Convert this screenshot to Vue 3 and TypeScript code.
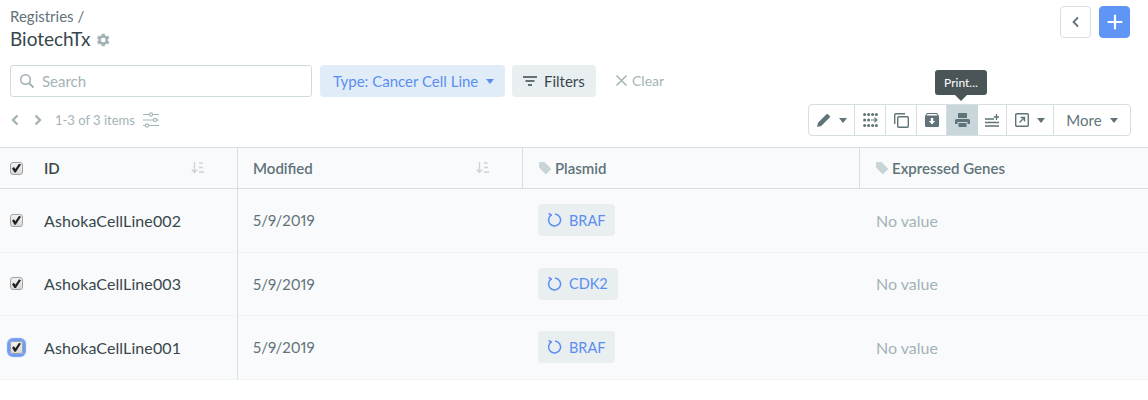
<template>
  <div class="page">
    <div class="head">
      <div>
        <div class="crumb">Registries /</div>
        <div class="title">
          <span>BiotechTx</span>
          <svg class="gear" width="16" height="16" viewBox="0 0 24 24"><path fill="#a3b3b8" d="M19.4 13a7.6 7.6 0 0 0 0-2l2.3-1.7-2.3-4-2.6 1.1a7.500 7.500 0 0 0-1.800-1L14.600 2.600h-4.600L9.600 5.400a7.500 7.500 0 0 0-1.800 1L5.200 5.300l-2.300 4L5.200 11a7.600 7.600 0 0 0 0 2l-2.300 1.700 2.300 4 2.600-1.100c.5.400 1.100.8 1.800 1l.4 2.800h4.600l.4-2.800c.7-.2 1.300-.6 1.800-1l2.600 1.100 2.300-4zM12.300 15.500a3.500 3.500 0 1 1 0-7 3.500 3.500 0 0 1 0 7z" /></svg>
        </div>
      </div>
      <div class="head-actions">
        <button class="square">
          <svg width="12" height="12" viewBox="0 0 12 12"><path d="M8 1.500 3.500 6 8 10.500" fill="none" stroke="#5f7378" stroke-width="1.800" /></svg>
        </button>
        <button class="square primary">
          <svg width="16" height="16" viewBox="0 0 16 16"><path d="M8 1.500v13M1.500 8h13" stroke="#fff" stroke-width="2.200" stroke-linecap="round" /></svg>
        </button>
      </div>
    </div>

    <div class="filters">
      <div class="search">
        <svg width="16" height="16" viewBox="0 0 16 16"><circle cx="6.500" cy="6.500" r="4.800" fill="none" stroke="#9fb0b5" stroke-width="1.500" /><path d="m10 10 4.500 4.500" stroke="#9fb0b5" stroke-width="1.800" /></svg>
        <span>Search</span>
      </div>
      <div class="chip type">Type: Cancer Cell Line<i class="caret"></i></div>
      <div class="chip filter">
        <svg width="14" height="10" viewBox="0 0 14 10"><path d="M0 1h14M2.500 5h9M5 9h4" stroke="#37474b" stroke-width="1.500" /></svg>
        Filters
      </div>
      <div class="clear">
        <svg width="13" height="13" viewBox="0 0 13 13"><path d="m1.500 1.500 10 10m0-10-10 10" stroke="#a3b3b8" stroke-width="1.500" /></svg>
        Clear
      </div>
    </div>

    <div class="toolbar-row">
      <div class="pager">
        <svg width="10" height="12" viewBox="0 0 10 12"><path d="M7.500 1.500 3 6l4.500 4.500" fill="none" stroke="#a3b3b8" stroke-width="2.400" /></svg>
        <svg class="next" width="10" height="12" viewBox="0 0 10 12"><path d="M2.500 1.500 7 6l-4.500 4.500" fill="none" stroke="#a3b3b8" stroke-width="2.400" /></svg>
        <span>1-3 of 3 items</span>
        <svg width="16" height="16" viewBox="0 0 16 16" fill="none" stroke="#a3b3b8" stroke-width="1.100"><path d="M0 2.500h6.500m3 0H16M0 8h10.500m3 0H16M0 13.500h2.500m3 0H16" /><circle cx="8" cy="2.500" r="1.600" /><circle cx="12" cy="8" r="1.600" /><circle cx="4" cy="13.500" r="1.600" /></svg>
      </div>
      <div class="tools">
        <div class="tool edit">
          <svg width="14" height="14" viewBox="0 0 14 14"><path fill="#5f7378" d="M0 14l1-4.200L9.500 1.300a1 1 0 0 1 1.400 0l1.800 1.800a1 1 0 0 1 0 1.400L4.200 13z" /></svg>
          <i class="caret dark"></i>
        </div>
        <div class="tool w31">
          <svg width="15" height="14" viewBox="0 0 15 14" fill="#5f7378"><circle cx="1.600" cy="1.600" r="1.500" /><circle cx="5.600" cy="1.600" r="1.500" /><circle cx="9.600" cy="1.600" r="1.500" /><circle cx="13.400" cy="1.600" r="1.500" /><circle cx="1.600" cy="7" r="1.500" /><circle cx="5.600" cy="7" r="1.500" /><circle cx="1.600" cy="12.400" r="1.500" /><circle cx="5.600" cy="12.400" r="1.500" /><circle cx="9.600" cy="12.400" r="1.500" /><circle cx="13.400" cy="12.400" r="1.500" /><path d="M8 6.400h4.500L11 4.900l.8-.7L14.700 7l-2.900 2.800-.8-.7 1.500-1.500H8z" /></svg>
        </div>
        <div class="tool w31">
          <svg width="15" height="15" viewBox="0 0 15 15" fill="none" stroke="#5f7378" stroke-width="1.400"><rect x="3.700" y="3.700" width="10.600" height="10.600" rx="1" /><path d="M.7 11V2A1.300 1.300 0 0 1 2 .7h9" /></svg>
        </div>
        <div class="tool w30">
          <svg width="14" height="14" viewBox="0 0 14 14"><path fill="#5f7378" fill-rule="evenodd" d="M2 0h10l2 3v10a1 1 0 0 1-1 1H1a1 1 0 0 1-1-1V3zM5.800 5v3H3.800L7 11.500 10.200 8h-2V5zM1.500 2.500h11L11.500 1h-9z" /></svg>
        </div>
        <div class="tool active">
          <svg width="15" height="14" viewBox="0 0 15 14"><path fill="#5f7378" fill-rule="evenodd" d="M3 0h9v5H3zM1.500 6h12A1.500 1.500 0 0 1 15 7.500V11h-2.500V9h-10v2H0V7.500A1.500 1.500 0 0 1 1.500 6zM3.500 10h8v4h-8z" /></svg>
          <div class="tooltip">Print...</div>
        </div>
        <div class="tool w29">
          <svg width="14" height="13" viewBox="0 0 14 13"><path d="M0 5h9M0 8.500h14M0 12h14" stroke="#5f7378" stroke-width="1.400" /><path d="M11.500 0v6M8.800 3h5.400" stroke="#5f7378" stroke-width="1.300" /></svg>
        </div>
        <div class="tool w47">
          <svg width="14" height="14" viewBox="0 0 14 14" fill="none" stroke="#5f7378" stroke-width="1.400"><rect x=".7" y=".7" width="12.600" height="12.600" rx="1" /><path d="M4.500 9.500 9.500 4.500M5.500 4.500h4v4" /></svg>
          <i class="caret dark"></i>
        </div>
        <div class="tool more">More<i class="caret dark"></i></div>
      </div>
    </div>

    <div class="grid">
      <div class="row header">
        <div class="cell first">
          <input type="checkbox" checked />
          <b class="id-label">ID</b>
          <svg class="sort" width="13" height="12" viewBox="0 0 13 12"><path d="M3.500 0v10M.8 7.500l2.700 3 2.700-3" fill="none" stroke="#c8d4d7" stroke-width="1.300" /><path d="M8 1h3.500M8 5.500h4M8 10h5" stroke="#c8d4d7" stroke-width="1.300" /></svg>
        </div>
        <div class="cell second">
          <b>Modified</b>
          <svg class="sort" width="13" height="12" viewBox="0 0 13 12"><path d="M3.500 0v10M.8 7.500l2.700 3 2.700-3" fill="none" stroke="#c8d4d7" stroke-width="1.300" /><path d="M8 1h3.500M8 5.500h4M8 10h5" stroke="#c8d4d7" stroke-width="1.300" /></svg>
        </div>
        <div class="cell" v-for="col in tagColumns" :key="col">
          <svg class="tag" width="12" height="12" viewBox="0 0 12 12"><path fill="#c8d4d7" d="M0 1a1 1 0 0 1 1-1h4.500l6.200 6.200a1 1 0 0 1 0 1.400l-4.100 4.100a1 1 0 0 1-1.400 0L0 5.500z" /></svg>
          <b>{{ col }}</b>
        </div>
      </div>
      <div class="row" v-for="(item, i) in items" :key="item.id">
        <div class="cell first">
          <span class="check-wrap" :class="{ focused: i === 2 }"><input type="checkbox" checked /></span>
          <span class="name">{{ item.id }}</span>
        </div>
        <div class="cell second date">5/9/2019</div>
        <div class="cell">
          <span class="pill">
            <svg width="16" height="16" viewBox="0 0 16 16" fill="none" stroke="#5b8def" stroke-width="1.500"><path d="M4.700 2.700A6 6 0 1 0 8 2" /><path d="M1.700 1.300 4.600 3.400" /></svg>
            {{ item.plasmid }}
          </span>
        </div>
        <div class="cell empty">No value</div>
      </div>
    </div>
  </div>
</template>

<script setup lang="ts">
interface Item {
  id: string
  plasmid: string
}

const tagColumns: string[] = ['Plasmid', 'Expressed Genes']

const items: Item[] = [
  { id: 'AshokaCellLine002', plasmid: 'BRAF' },
  { id: 'AshokaCellLine003', plasmid: 'CDK2' },
  { id: 'AshokaCellLine001', plasmid: 'BRAF' },
]
</script>

<style>
body {
  background: #fff;
}
</style>

<style scoped>
.page {
  height: 400px;
  overflow: hidden;
  font-family: Lato, "Open Sans", sans-serif;
  color: #37474b;
}

.head {
  display: flex;
  justify-content: space-between;
  padding: 6px 18px 0 10px;
  height: 65px;
  box-sizing: border-box;
}

.crumb {
  font-size: 15px;
  line-height: 20px;
  color: #5f7378;
}

.title {
  display: flex;
  align-items: center;
  gap: 5px;
  margin-top: 1px;
  font-size: 19px;
  line-height: 24px;
}

.gear {
  margin-top: 2px;
}

.head-actions {
  display: flex;
  gap: 8px;
}

.square {
  width: 31px;
  height: 32px;
  display: flex;
  align-items: center;
  justify-content: center;
  padding: 0;
  background: #fff;
  border: 1px solid #d5dfe2;
  border-radius: 4px;
}

.square.primary {
  background: #5f95f5;
  border-color: #5f95f5;
}

.filters {
  display: flex;
  align-items: center;
  padding-left: 10px;
  height: 32px;
}

.search {
  width: 302px;
  height: 32px;
  box-sizing: border-box;
  display: flex;
  align-items: center;
  gap: 7px;
  padding-left: 8px;
  border: 1px solid #cfdbde;
  border-radius: 3px;
  color: #a3b3b8;
  font-size: 15px;
}

.chip {
  height: 32px;
  display: flex;
  align-items: center;
  border-radius: 4px;
  font-size: 15px;
}

.type {
  width: 185px;
  box-sizing: border-box;
  margin-left: 8px;
  padding-left: 13px;
  background: #e0edf9;
  color: #5b8def;
}

.caret {
  display: inline-block;
  width: 0;
  height: 0;
  margin-left: 8px;
  border-left: 4px solid transparent;
  border-right: 4px solid transparent;
  border-top: 5px solid #5b8def;
}

.caret.dark {
  border-top-color: #5f7378;
}

.filter {
  width: 84px;
  box-sizing: border-box;
  margin-left: 7px;
  padding-left: 11px;
  gap: 7px;
  background: #e9eff1;
}

.clear {
  display: flex;
  align-items: center;
  gap: 4px;
  margin-left: 19px;
  margin-top: -2px;
  font-size: 14px;
  color: #a3b3b8;
}

.toolbar-row {
  display: flex;
  justify-content: space-between;
  align-items: center;
  height: 32px;
  margin-top: 7px;
  padding: 0 17px 0 10px;
}

.pager {
  display: flex;
  align-items: center;
  font-size: 13px;
  color: #a3b3b8;
}

.next {
  margin-left: 13px;
}

.pager span {
  margin: 0 8px 0 12px;
}

.tools {
  display: flex;
  height: 32px;
  box-sizing: border-box;
  border: 1px solid #d5dfe2;
  border-radius: 4px;
  color: #5f7378;
  font-size: 15px;
}

.tool {
  position: relative;
  display: flex;
  align-items: center;
  justify-content: center;
  box-sizing: border-box;
  border-right: 1px solid #d5dfe2;
}

.edit {
  width: 46px;
}

.w31 {
  width: 31px;
}

.w30 {
  width: 30px;
}

.w29 {
  width: 29px;
}

.w47 {
  width: 47px;
}

.tool.active {
  width: 31px;
  background: #c9d7da;
  border-right: 0;
}

.more {
  width: 76px;
  border-right: 0;
}

.tooltip {
  position: absolute;
  left: -12px;
  top: -35px;
  width: 52px;
  height: 25px;
  display: flex;
  align-items: center;
  justify-content: center;
  background: #4a5557;
  border-radius: 3px;
  color: #fff;
  font-size: 12px;
}

.tooltip::after {
  content: "";
  position: absolute;
  left: 20px;
  bottom: -6px;
  border-left: 6px solid transparent;
  border-right: 6px solid transparent;
  border-top: 6px solid #4a5557;
}

.grid {
  margin-top: 11px;
  border-top: 1px solid #d5dfe2;
  background: #f9fafc;
}

.row {
  display: grid;
  grid-template-columns: 238px 285px 337px 1fr;
  box-sizing: border-box;
  height: 63.500px;
  border-bottom: 1px solid #eef2f4;
  font-size: 16px;
}

.row.header {
  height: 41px;
  border-bottom: 1px solid #d5dfe2;
  font-size: 15px;
}

.row.header b {
  color: #5f7378;
  font-weight: 600;
}

.row.header .id-label {
  color: #37474b;
}

.cell {
  display: flex;
  align-items: center;
  padding-left: 16px;
  color: #5f7378;
  border-right: 1px solid transparent;
}

.header .cell {
  border-right: 1px solid #d5dfe2;
}

.header .cell:last-child {
  border-right: 0;
}

.first {
  padding-left: 10px;
  border-right: 1px solid #d5dfe2;
}

.second {
  padding-left: 15px;
}

.date {
  font-size: 15px;
  font-variant-numeric: proportional-nums;
}

.first input {
  appearance: none;
  position: relative;
  width: 13px;
  height: 13px;
  margin: 0;
  box-sizing: border-box;
  border: 1px solid #a2a2a2;
  border-radius: 3px;
  background: linear-gradient(#f2f2f2, #d9d9d9);
}

.first input::before {
  content: "";
  position: absolute;
  left: 1px;
  top: 1px;
  width: 9px;
  height: 9px;
  background: #222;
  clip-path: polygon(0 55%, 22% 38%, 38% 62%, 78% 0, 100% 12%, 42% 100%, 28% 100%);
}

.check-wrap {
  display: flex;
  width: 13px;
  height: 13px;
  border-radius: 3px;
}

.check-wrap.focused {
  box-shadow: 0 0 1px 3px #6f9cf2;
}

.id-label {
  margin-left: 21px;
}

.name {
  margin-left: 21px;
  color: #37474b;
  font-size: 16px;
  letter-spacing: 0.1px;
}

.sort {
  margin-left: auto;
  margin-right: 33px;
}

.tag {
  margin-right: 4px;
}

.pill {
  display: flex;
  align-items: center;
  gap: 6px;
  height: 32px;
  margin-left: -1px;
  padding: 0 10px 0 9px;
  background: #e9eff1;
  border-radius: 4px;
  color: #5b8def;
  font-size: 14.500px;
}

.empty {
  color: #a3b3b8;
}
</style>
